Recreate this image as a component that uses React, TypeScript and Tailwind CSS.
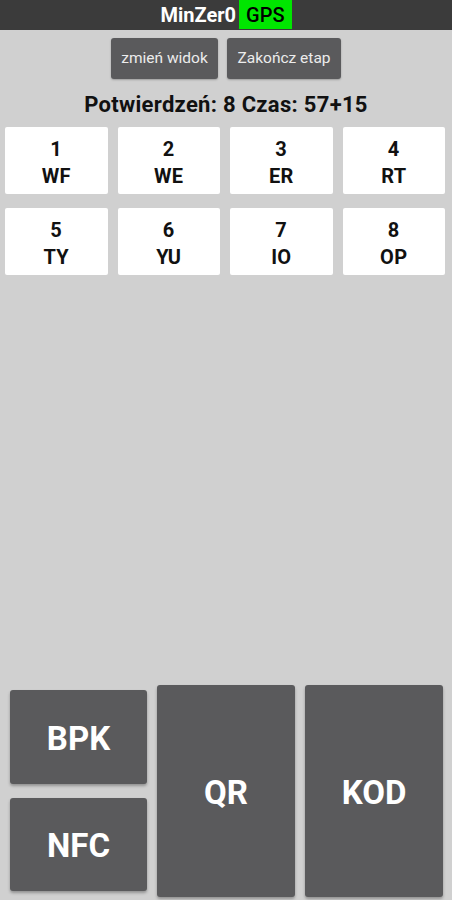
import React from "react";

const cells = [
  ["1", "WF"],
  ["2", "WE"],
  ["3", "ER"],
  ["4", "RT"],
  ["5", "TY"],
  ["6", "YU"],
  ["7", "IO"],
  ["8", "OP"],
];

export default function App() {
  return (
    <div
      className="w-[452px] h-[900px] bg-[#d0d0d0] flex flex-col overflow-hidden"
      style={{ fontFamily: "Roboto, 'Noto Sans', sans-serif" }}
    >
      <div className="h-[30px] bg-[#3b3b3b] flex items-center justify-center shrink-0">
        <span className="text-white font-bold text-[20px] leading-none">MinZer0</span>
        <span className="ml-[3px] h-[29px] self-start bg-[#00e600] px-[7px] flex items-center text-black font-medium text-[20px] leading-none">
          GPS
        </span>
      </div>

      <div className="mt-[8px] flex justify-center gap-[9px]">
        <button className="w-[107px] h-[41px] bg-[#5a5a5c] rounded-[3px] text-[15.5px] text-[#ececec] shadow-[0_1px_2px_rgba(0,0,0,0.25)]">
          zmień widok
        </button>
        <button className="w-[114px] h-[41px] bg-[#5a5a5c] rounded-[3px] text-[15.5px] text-[#ececec] shadow-[0_1px_2px_rgba(0,0,0,0.25)]">
          Zakończ etap
        </button>
      </div>

      <div className="mt-[14px] h-[24px] leading-[24px] text-center text-[22px] tracking-[0.3px] font-bold text-[#111]">
        Potwierdzeń: 8 Czas: 57+15
      </div>

      <div className="mt-[10px] pl-[5px] pr-[7px] grid grid-cols-4 gap-x-[10px] gap-y-[14px]">
        {cells.map(([n, l]) => (
          <div
            key={n}
            className="h-[67px] bg-white rounded-[2px] flex flex-col items-center pt-[9px] text-[20px] tracking-[0.3px] font-bold text-[#111] leading-[27px]"
          >
            <span>{n}</span>
            <span>{l}</span>
          </div>
        ))}
      </div>

      <div className="flex-1" />

      <div className="flex items-end gap-[10px] pl-[10px] pr-[9px] pb-[3px]">
        <div className="w-[137px] flex flex-col gap-[14px] pb-[6px]">
          <div className="h-[94px] bg-[#5a5a5c] rounded-[3px] shadow-[0_2px_3px_rgba(0,0,0,0.3)] flex items-center justify-center pt-[3px] text-white font-bold text-[33px]">
            BPK
          </div>
          <div className="h-[93px] bg-[#5a5a5c] rounded-[3px] shadow-[0_2px_3px_rgba(0,0,0,0.3)] flex items-center justify-center pt-[3px] text-white font-bold text-[33px]">
            NFC
          </div>
        </div>
        <div className="w-[138px] h-[212px] bg-[#5a5a5c] rounded-[3px] shadow-[0_2px_3px_rgba(0,0,0,0.3)] flex items-center justify-center pt-[3px] text-white font-bold text-[33px]">
          QR
        </div>
        <div className="w-[138px] h-[212px] bg-[#5a5a5c] rounded-[3px] shadow-[0_2px_3px_rgba(0,0,0,0.3)] flex items-center justify-center pt-[3px] text-white font-bold text-[33px]">
          KOD
        </div>
      </div>
    </div>
  );
}
